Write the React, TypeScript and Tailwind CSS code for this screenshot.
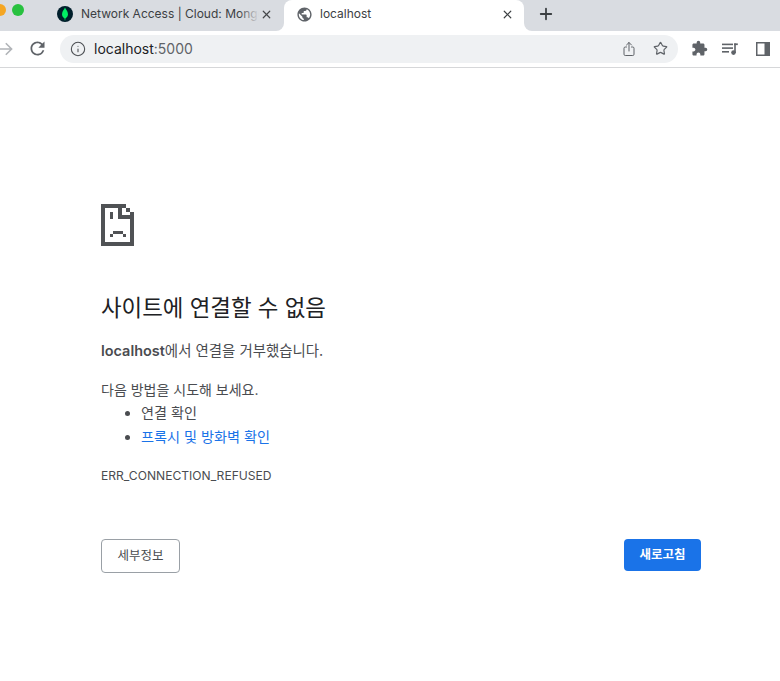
import { Info, Plus, Star, X } from "lucide-react";
import { MdExtension, MdPublic, MdRefresh } from "react-icons/md";
import { IoShareOutline } from "react-icons/io5";

const FONT = "[font-family:Inter,'Noto_Sans_CJK_KR',sans-serif]";

function MongoLeaf() {
  return (
    <span className="flex h-4 w-4 items-center justify-center rounded-full bg-[#001e2b]">
      <svg width="8" height="14" viewBox="0 0 8 14">
        <path d="M4 0.5C4.4 2 7 4 7 7.2 7 9.5 5.4 10.8 4.4 11.4L4.2 13.5H3.8L3.6 11.4C2.6 10.8 1 9.5 1 7.2 1 4 3.6 2 4 0.5Z" fill="#00ed64" />
      </svg>
    </span>
  );
}

function ForwardArrow() {
  return (
    <svg width="14" height="14" viewBox="0 0 14 14" fill="none" stroke="#b1b4b8" strokeWidth="1.6">
      <path d="M0 7H12.5M6.8 1.2L12.6 7L6.8 12.8" />
    </svg>
  );
}

function QueueMusic() {
  return (
    <svg width="16" height="12" viewBox="0 0 16 12" fill="#5f6368">
      <rect x="0" y="0.6" width="11" height="1.6" />
      <rect x="0" y="4.3" width="11" height="1.6" />
      <rect x="0" y="8" width="7" height="1.6" />
      <rect x="12.2" y="0.4" width="1.6" height="9.6" />
      <rect x="12.2" y="0.4" width="3.6" height="1.7" />
      <circle cx="11.5" cy="9.6" r="2.3" />
    </svg>
  );
}

function SidePanel() {
  return (
    <svg width="14" height="14" viewBox="0 0 14 14">
      <rect width="14" height="14" fill="#5f6368" />
      <rect x="1.5" y="1.5" width="7" height="11" fill="#ffffff" />
    </svg>
  );
}

function SadDoc() {
  return (
    <svg width="33" height="42" viewBox="0 0 33 42" fill="#505255" shapeRendering="crispEdges">
      <rect x="0" y="0" width="4" height="42" />
      <rect x="0" y="38" width="33" height="4" />
      <rect x="0" y="0" width="25" height="4" />
      <rect x="17" y="0" width="4" height="15" />
      <rect x="17" y="11" width="16" height="4" />
      <rect x="25" y="4" width="4" height="4" />
      <rect x="29" y="8" width="4" height="34" />
      <rect x="9" y="8" width="3" height="7" />
      <rect x="12" y="27" width="10" height="3" />
      <rect x="9" y="30" width="3" height="3" />
      <rect x="22" y="30" width="3" height="3" />
    </svg>
  );
}

function TabStrip() {
  return (
    <div className="flex h-[31px] items-stretch bg-[#d9dce1]">
      <div className="flex w-[55px] shrink-0 items-start pt-1 pl-0">
        <span className="ml-[-6px] h-3 w-3 rounded-full bg-[#f5a623]" />
        <span className="ml-[6px] h-3 w-3 rounded-full bg-[#28c13f]" />
      </div>
      <div className="flex w-[229px] shrink-0 items-center pb-[3px] pl-[2px]">
        <MongoLeaf />
        <div className="relative ml-2 w-[178px] overflow-hidden whitespace-nowrap text-xs text-[#3c4043]">
          Network Access | Cloud: MongoDB Cloud
          <span className="absolute inset-y-0 right-0 w-5 bg-gradient-to-r from-transparent to-[#d9dce1]" />
        </div>
        <X size={13} strokeWidth={2.2} className="ml-[1px] text-[#45474a]" />
      </div>
      <div className="relative flex w-[240px] shrink-0 items-center rounded-t-lg bg-white pb-[3px] pl-[12px]">
        <span className="absolute bottom-0 left-[-8px] h-2 w-2 bg-white">
          <span className="block h-2 w-2 rounded-br-lg bg-[#d9dce1]" />
        </span>
        <span className="absolute bottom-0 right-[-8px] h-2 w-2 bg-white">
          <span className="block h-2 w-2 rounded-bl-lg bg-[#d9dce1]" />
        </span>
        <MdPublic size={17} className="text-[#5f6368]" />
        <span className="ml-[7px] text-xs text-[#3c4043]">localhost</span>
        <X size={13} strokeWidth={2.2} className="ml-auto mr-[10px] text-[#3c4043]" />
      </div>
      <div className="flex items-center pb-[3px] pl-[13px]">
        <Plus size={18} strokeWidth={2.4} className="text-[#3c4043]" />
      </div>
    </div>
  );
}

function Toolbar() {
  return (
    <div className="flex h-[37px] items-center border-b border-[#d6d7d9] bg-white pb-[1px]">
      <div className="ml-[-1px] w-[28px] shrink-0">
        <ForwardArrow />
      </div>
      <MdRefresh size={21} className="shrink-0 text-[#5f6368]" />
      <div className="ml-[12px] flex h-7 w-[618px] shrink-0 items-center rounded-full bg-[#eff1f3] pl-[10px] pr-[10px]">
        <Info size={16} strokeWidth={1.6} className="text-[#4c4f53]" />
        <span className="ml-2 text-sm text-[#202124]">
          localhost<span className="text-[#5f6368]">:5000</span>
        </span>
        <IoShareOutline size={16} className="ml-auto text-[#5f6368]" />
        <Star size={15} strokeWidth={1.9} className="ml-4 text-[#5f6368]" />
      </div>
      <MdExtension size={17} className="ml-[13px] shrink-0 text-[#5f6368]" />
      <span className="ml-[14px] shrink-0">
        <QueueMusic />
      </span>
      <span className="ml-[18px] shrink-0">
        <SidePanel />
      </span>
    </div>
  );
}

export default function App() {
  return (
    <div className={`h-[681px] w-[780px] overflow-hidden bg-white ${FONT}`}>
      <TabStrip />
      <Toolbar />

      <main className="pl-[101px] pr-[79px] pt-[136px]">
        <SadDoc />
        <h1 className="mt-[44px] text-[22.4px] font-normal leading-[36px] text-[#202124]">
          사이트에 연결할 수 없음
        </h1>
        <p className="mt-3 text-[14.45px] leading-[26px] text-[#4a4c50]">
          <strong className="font-semibold">localhost</strong>에서 연결을 거부했습니다.
        </p>
        <p className="mt-[13px] text-sm leading-[26px] text-[#4a4c50]">다음 방법을 시도해 보세요.</p>
        <ul className="mt-[-2px] list-disc pl-[40px] text-[14.15px] leading-6 text-[#4a4c50]">
          <li>연결 확인</li>
          <li>
            <a className="text-[#1a73e8]">프록시 및 방화벽 확인</a>
          </li>
        </ul>
        <p className="mt-[18px] text-[12.1px] leading-[18px] text-[#4a4c50]">ERR_CONNECTION_REFUSED</p>

        <div className="mt-[54px] flex items-start justify-between">
          <button className="h-[34px] w-[79px] rounded border border-[#9aa0a6] bg-white text-[12.5px] text-[#4a4c50]">
            세부정보
          </button>
          <button className="h-8 w-[77px] rounded bg-[#1a73e8] text-[12.5px] font-semibold text-white">
            새로고침
          </button>
        </div>
      </main>
    </div>
  );
}
